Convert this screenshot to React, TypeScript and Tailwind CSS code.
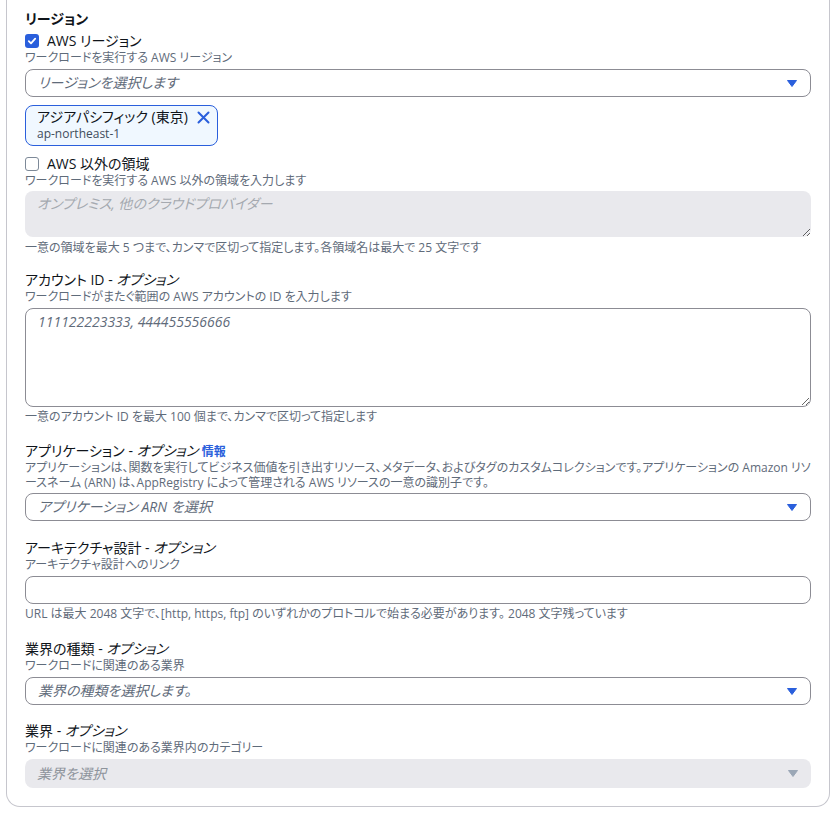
function Caret({ disabled }: { disabled?: boolean }) {
  return (
    <svg
      width="10"
      height="7"
      viewBox="0 0 10 7"
      className={disabled ? "text-[#9ba7b6]" : "text-[#2a5fdc]"}
    >
      <path d="M0.5 0.5h9L5 6.5z" fill="currentColor" stroke="currentColor" strokeLinejoin="round" />
    </svg>
  );
}

function Label({ text, optional }: { text: string; optional?: boolean }) {
  return (
    <div className="text-sm leading-[18px] text-[#0f141a]">
      {text}
      {optional && (
        <>
          {" - "}
          <i>オプション</i>
        </>
      )}
    </div>
  );
}

function Desc({ children }: { children: React.ReactNode }) {
  return <div className="text-xs leading-4 text-[#5f6b7a]">{children}</div>;
}

function Select({ placeholder, disabled }: { placeholder: string; disabled?: boolean }) {
  return (
    <div
      className={
        disabled
          ? "mt-[3px] flex h-[29px] items-center justify-between rounded-[8px] bg-[#e9e9ed] pl-[12px] pr-[13px]"
          : "mt-[3px] flex h-[28px] items-center justify-between rounded-[8px] border border-[#8c8c94] bg-white pl-[12px] pr-[13px]"
      }
    >
      <span
        className={
          disabled ? "text-sm italic text-[#8d939b]" : "text-sm italic text-[#5f6b7a]"
        }
      >
        {placeholder}
      </span>
      <Caret disabled={disabled} />
    </div>
  );
}

export default function App() {
  return (
    <div className="min-h-screen bg-white font-['Open_Sans','Noto_Sans_CJK_JP',sans-serif] [font-feature-settings:'palt']">
      <div className="ml-[6px] w-[824px] rounded-b-[14px] border-x border-b border-[#c6c6cd] px-[18px] pt-[10px] pb-[18px]">
        {/* リージョン */}
        <div className="text-sm leading-[18px] font-bold text-[#0f141a]">リージョン</div>
        <div className="mt-[4px] flex h-[18px] items-center gap-[8px]">
          <span className="flex h-[14px] w-[14px] items-center justify-center rounded-[3px] bg-[#2a5fdc]">
            <svg width="10" height="10" viewBox="0 0 10 10">
              <path
                d="M1.8 5.2l2.2 2.2 4.2-4.8"
                fill="none"
                stroke="white"
                strokeWidth="1.8"
                strokeLinecap="round"
                strokeLinejoin="round"
              />
            </svg>
          </span>
          <span className="text-sm leading-[18px] text-[#0f141a]">AWS リージョン</span>
        </div>
        <Desc>ワークロードを実行する AWS リージョン</Desc>
        <Select placeholder="リージョンを選択します" />

        <div className="mt-[8px] flex h-[41px] w-fit flex-col justify-center rounded-[8px] border border-[#2a5fdc] bg-[#f0f8ff] pl-[11px] pr-[7px]">
          <div className="flex items-center gap-[9px]">
            <span className="text-sm leading-4 text-[#0f141a]">アジアパシフィック (東京)</span>
            <svg width="13" height="13" viewBox="0 0 13 13" className="text-[#2a5fdc]">
              <path d="M1.5 1.5l10 10M11.5 1.5l-10 10" stroke="currentColor" strokeWidth="2" strokeLinecap="round" />
            </svg>
          </div>
          <div className="mt-[1px] text-xs leading-4 text-[#414d5c]">ap-northeast-1</div>
        </div>

        <div className="mt-[9px] flex h-[18px] items-center gap-[8px]">
          <span className="h-[14px] w-[14px] rounded-[3px] border border-[#7d8998] bg-white" />
          <span className="text-sm leading-[18px] text-[#0f141a]">AWS 以外の領域</span>
        </div>
        <Desc>ワークロードを実行する AWS 以外の領域を入力します</Desc>
        <textarea
          readOnly
          placeholder="オンプレミス, 他のクラウドプロバイダー"
          className="mt-[2px] block h-[46px] w-full rounded-[8px] bg-[#e9e9ed] px-[12px] py-[3px] text-sm outline-none placeholder:italic placeholder:text-[#a5a9b0]"
        />
        <div className="mt-[3px]">
          <Desc>一意の領域を最大 5 つまで、カンマで区切って指定します。各領域名は最大で 25 文字です</Desc>
        </div>

        {/* アカウント ID */}
        <div className="mt-[15px]">
          <Label text="アカウント ID" optional />
          <Desc>ワークロードがまたぐ範囲の AWS アカウントの ID を入力します</Desc>
          <textarea
            readOnly
            placeholder="111122223333, 444455556666"
            className="mt-[3px] block h-[99px] w-full rounded-[8px] border border-[#8c8c94] bg-white px-[12px] py-[3px] text-sm outline-none placeholder:italic placeholder:text-[#5f6b7a]"
          />
          <div className="mt-[2px]">
            <Desc>一意のアカウント ID を最大 100 個まで、カンマで区切って指定します</Desc>
          </div>
        </div>

        {/* アプリケーション */}
        <div className="mt-[17px]">
          <div className="text-sm leading-[18px] text-[#0f141a]">
            アプリケーション - <i>オプション</i>{" "}
            <a href="#" className="text-xs font-bold text-[#2a5fdc]">
              情報
            </a>
          </div>
          <div className="text-xs leading-[15px] text-[#5f6b7a]">
            アプリケーションは、関数を実行してビジネス価値を引き出すリソース、メタデータ、およびタグのカスタムコレクションです。アプリケーションの Amazon リソースネーム (ARN) は、AppRegistry によって管理される AWS リソースの一意の識別子です。
          </div>
          <Select placeholder="アプリケーション ARN を選択" />
        </div>

        {/* アーキテクチャ設計 */}
        <div className="mt-[18px]">
          <Label text="アーキテクチャ設計" optional />
          <Desc>アーキテクチャ設計へのリンク</Desc>
          <input
            readOnly
            type="text"
            className="mt-[3px] block h-[28px] w-full rounded-[8px] border border-[#8c8c94] bg-white px-[12px] text-sm outline-none"
          />
          <div className="mt-[2px]">
            <Desc>
              URL は最大 2048 文字で、[http, https, ftp] のいずれかのプロトコルで始まる必要があります。 2048 文字残っています
            </Desc>
          </div>
        </div>

        {/* 業界の種類 */}
        <div className="mt-[18px]">
          <Label text="業界の種類" optional />
          <Desc>ワークロードに関連のある業界</Desc>
          <Select placeholder="業界の種類を選択します。" />
        </div>

        {/* 業界 */}
        <div className="mt-[17px]">
          <Label text="業界" optional />
          <Desc>ワークロードに関連のある業界内のカテゴリー</Desc>
          <Select placeholder="業界を選択" disabled />
        </div>
      </div>
    </div>
  );
}
